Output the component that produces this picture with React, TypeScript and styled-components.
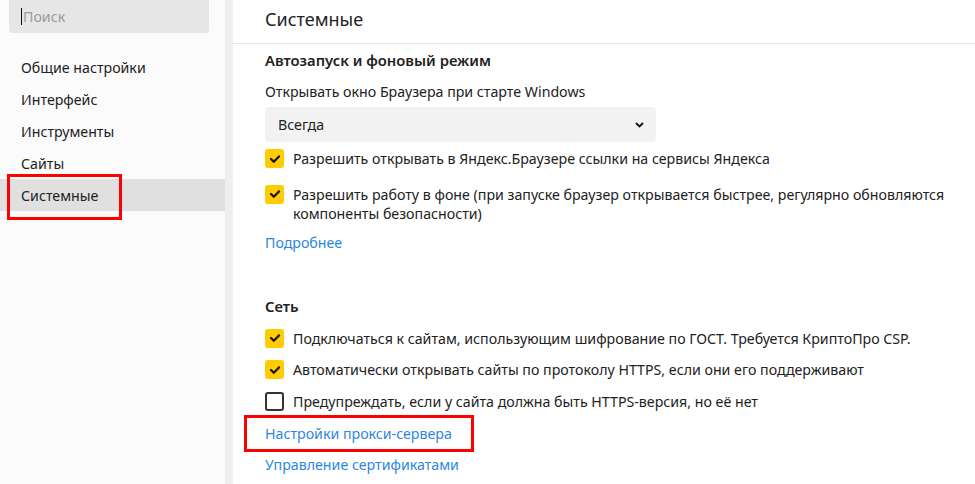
import React from "react";
import styled, { createGlobalStyle } from "styled-components";

const Global = createGlobalStyle`
  html, body { margin: 0; padding: 0; background: #fff; }
  body { font-family: "Noto Sans", "Open Sans", sans-serif; color: #222; }
  * { box-sizing: border-box; }
`;

const Page = styled.div`
  display: flex;
  width: 975px;
  height: 484px;
  overflow: hidden;
`;

const Sidebar = styled.nav`
  width: 225px;
  flex: none;
  background: #fbfbfb;
  display: flex;
  flex-direction: column;
`;

const Gutter = styled.div`
  width: 8px;
  flex: none;
  background: #f0efee;
`;

const Search = styled.div`
  margin: 0 16px 0 9px;
  height: 33px;
  background: #e6e6e6;
  border-radius: 0 0 4px 4px;
  display: flex;
  align-items: center;
  padding-left: 12px;
  font-size: 14.2px;
  color: #9a9a9a;
`;

const Caret = styled.span`
  display: inline-block;
  width: 1px;
  height: 17px;
  background: #111;
  margin-right: 1px;
`;

const NavList = styled.div`
  margin-top: 18px;
  display: flex;
  flex-direction: column;
`;

const NavItem = styled.div<{ $active?: boolean }>`
  position: relative;
  height: 32px;
  display: flex;
  align-items: center;
  padding-left: 21px;
  font-size: 14.2px;
  color: #222;
  background: ${(p) => (p.$active ? "#e0e0e0" : "transparent")};
`;

const Highlight = styled.span<{ $l: number; $t: number; $w: number; $h: number }>`
  position: absolute;
  left: ${(p) => p.$l}px;
  top: ${(p) => p.$t}px;
  width: ${(p) => p.$w}px;
  height: ${(p) => p.$h}px;
  border: 3px solid #ff0000;
  pointer-events: none;
`;

const Main = styled.main`
  flex: 1;
  background: #fff;
  display: flex;
  flex-direction: column;
`;

const Header = styled.header`
  height: 44px;
  border-bottom: 1px solid #e6e6e6;
  display: flex;
  align-items: center;
  padding: 0 32px 6px;
  font-size: 18px;
  color: #222;
`;

const Content = styled.div`
  padding: 0 12px 0 32px;
  display: flex;
  flex-direction: column;
`;

const SectionTitle = styled.div<{ $top: number }>`
  margin-top: ${(p) => p.$top}px;
  font-size: 14.8px;
  font-weight: 600;
  line-height: 20px;
  color: #222;
`;

const Label = styled.div`
  margin-top: 12px;
  font-size: 14.2px;
  line-height: 20px;
`;

const Select = styled.div`
  margin-top: 5px;
  width: 391px;
  height: 35px;
  background: #f2f2f2;
  border-radius: 4px;
  display: flex;
  align-items: center;
  justify-content: space-between;
  padding: 0 12px 0 13px;
  font-size: 14.2px;
`;

const Row = styled.label<{ $top: number }>`
  margin-top: ${(p) => p.$top}px;
  display: flex;
  align-items: flex-start;
  gap: 9px;
  font-size: 14.2px;
  line-height: 19.5px;
`;

const Box = styled.span<{ $on?: boolean }>`
  flex: none;
  width: 19px;
  height: 19px;
  border-radius: 3px;
  display: flex;
  align-items: center;
  justify-content: center;
  background: ${(p) => (p.$on ? "#ffcc00" : "#fff")};
  border: ${(p) => (p.$on ? "none" : "2px solid #333")};
`;

const RowText = styled.span``;

const LinkWrap = styled.div<{ $top: number }>`
  position: relative;
  margin-top: ${(p) => p.$top}px;
  align-self: flex-start;
`;

const Link = styled.a`
  font-size: 14.2px;
  line-height: 20px;
  color: #2e86de;
  text-decoration: none;
  display: block;
`;

const Check = () => (
  <svg width="12" height="10" viewBox="0 0 12 10">
    <path d="M2 5 L4.8 7.8 L10 2.4" fill="none" stroke="#111" strokeWidth="2.2" strokeLinecap="round" strokeLinejoin="round" />
  </svg>
);

const Chevron = () => (
  <svg width="9" height="6" viewBox="0 0 9 6">
    <path d="M1 1 L4.5 4.5 L8 1" fill="none" stroke="#111" strokeWidth="1.8" />
  </svg>
);

const CheckRow = ({ on, top, children }: { on?: boolean; top: number; children: React.ReactNode }) => (
  <Row $top={top}>
    <Box $on={on}>{on && <Check />}</Box>
    <RowText>{children}</RowText>
  </Row>
);

export default function App() {
  return (
    <>
      <Global />
      <Page>
        <Sidebar>
          <Search>
            <Caret />
            Поиск
          </Search>
          <NavList>
            <NavItem>Общие настройки</NavItem>
            <NavItem>Интерфейс</NavItem>
            <NavItem>Инструменты</NavItem>
            <NavItem>Сайты</NavItem>
            <NavItem $active>
              Системные
              <Highlight $l={7} $t={-5} $w={115} $h={46} />
            </NavItem>
          </NavList>
        </Sidebar>
        <Gutter />
        <Main>
          <Header>Системные</Header>
          <Content>
            <SectionTitle $top={6}>Автозапуск и фоновый режим</SectionTitle>
            <Label>Открывать окно Браузера при старте Windows</Label>
            <Select>
              Всегда
              <Chevron />
            </Select>
            <CheckRow on top={7}>Разрешить открывать в Яндекс.Браузере ссылки на сервисы Яндекса</CheckRow>
            <CheckRow on top={16}>
              Разрешить работу в фоне (при запуске браузер открывается быстрее, регулярно обновляются компоненты безопасности)
            </CheckRow>
            <LinkWrap $top={9}>
              <Link>Подробнее</Link>
            </LinkWrap>
            <SectionTitle $top={43}>Сеть</SectionTitle>
            <CheckRow on top={13}>Подключаться к сайтам, использующим шифрование по ГОСТ. Требуется КриптоПро CSP.</CheckRow>
            <CheckRow on top={12}>Автоматически открывать сайты по протоколу HTTPS, если они его поддерживают</CheckRow>
            <CheckRow top={12}>Предупреждать, если у сайта должна быть HTTPS-версия, но её нет</CheckRow>
            <LinkWrap $top={13}>
              <Link>Настройки прокси-сервера</Link>
              <Highlight $l={-21} $t={-9} $w={230} $h={37} />
            </LinkWrap>
            <LinkWrap $top={11}>
              <Link>Управление сертификатами</Link>
            </LinkWrap>
          </Content>
        </Main>
      </Page>
    </>
  );
}
